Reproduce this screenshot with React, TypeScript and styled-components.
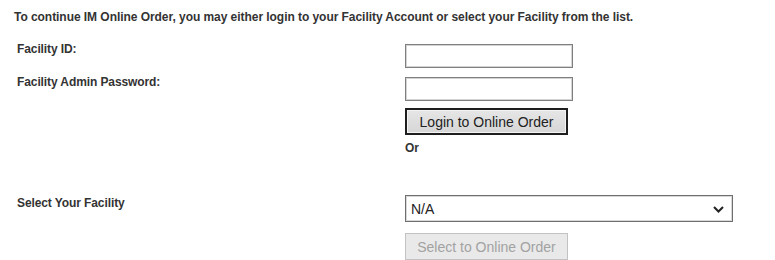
import React from "react";
import styled, { createGlobalStyle } from "styled-components";

const GlobalStyle = createGlobalStyle`
  body {
    margin: 0;
    background: #ffffff;
    font-family: "Liberation Sans", Arial, sans-serif;
    color: #333333;
  }
`;

const Page = styled.div`
  padding: 10px 0 0 14px;
  width: 761px;
  height: 250px;
  overflow: hidden;
`;

const Intro = styled.p`
  margin: 0 0 20px;
  font-size: 12px;
  line-height: 14px;
  font-weight: bold;
  letter-spacing: -0.05px;
  white-space: nowrap;
`;

const FormGrid = styled.div`
  display: grid;
  grid-template-columns: 391px 1fr;
  row-gap: 9px;
  align-items: start;
`;

const Label = styled.label<{ $top?: number }>`
  padding-left: 3px;
  font-size: 12px;
  line-height: 14px;
  font-weight: bold;
  letter-spacing: -0.1px;
  margin-top: ${(props) => props.$top ?? 0}px;
`;

const Cell = styled.div`
  display: flex;
  flex-direction: column;
  align-items: flex-start;
`;

const TextInput = styled.input`
  box-sizing: border-box;
  width: 168px;
  height: 24px;
  margin: 0;
  border: 1px solid #7f7f7f;
  box-shadow: inset 0 0 0 1px #d4d4d4;
  background: #ffffff;
  outline: none;
`;

const LoginButton = styled.button`
  box-sizing: border-box;
  width: 163px;
  height: 27px;
  margin: -2px 0 0;
  border: 2px solid #1e1e1e;
  box-shadow: inset 0 0 0 1px #f4f4f4;
  background: linear-gradient(#e6e6e6, #d6d6d6);
  font-family: "Liberation Sans", Arial, sans-serif;
  font-size: 14px;
  color: #222222;
  padding: 0;
`;

const OrText = styled.span`
  margin-top: 6px;
  font-size: 12px;
  line-height: 14px;
  font-weight: bold;
`;

const SelectWrap = styled.div`
  position: relative;
  display: inline-block;
`;

const FacilitySelect = styled.select`
  box-sizing: border-box;
  display: block;
  width: 328px;
  height: 27px;
  margin: 0;
  padding: 0 0 0 5px;
  border: 1px solid #6f6f6f;
  box-shadow: inset 0 0 0 1px #d8d8d8;
  background: #ffffff;
  appearance: none;
  font-family: "Liberation Sans", Arial, sans-serif;
  font-size: 14px;
  color: #222222;
  outline: none;
`;

const Chevron = styled.svg`
  position: absolute;
  right: 9px;
  top: 11px;
  pointer-events: none;
`;

const SelectButton = styled.button`
  box-sizing: border-box;
  width: 163px;
  height: 27px;
  margin: 11px 0 0;
  border: 1px solid #c2c2c2;
  background: #e9e9e9;
  font-family: "Liberation Sans", Arial, sans-serif;
  font-size: 14px;
  color: #a2a2a2;
  padding: 0;
`;

const Spacer = styled.div`
  grid-column: 1 / 3;
  height: 22px;
`;

export default function App() {
  return (
    <>
      <GlobalStyle />
      <Page>
        <Intro>
          To continue IM Online Order, you may either login to your Facility
          Account or select your Facility from the list.
        </Intro>
        <FormGrid>
          <Label $top={-2}>Facility ID:</Label>
          <Cell>
            <TextInput type="text" />
          </Cell>
          <Label $top={-2}>Facility Admin Password:</Label>
          <Cell>
            <TextInput type="password" />
          </Cell>
          <div />
          <Cell>
            <LoginButton>Login to Online Order</LoginButton>
            <OrText>Or</OrText>
          </Cell>
          <Spacer />
          <Label $top={1}>Select Your Facility</Label>
          <Cell>
            <SelectWrap>
              <FacilitySelect defaultValue="N/A">
                <option>N/A</option>
              </FacilitySelect>
              <Chevron width="11" height="7" viewBox="0 0 11 7">
                <path
                  d="M1 1l4.5 4.5L10 1"
                  fill="none"
                  stroke="#222"
                  strokeWidth="2"
                />
              </Chevron>
            </SelectWrap>
            <SelectButton disabled>Select to Online Order</SelectButton>
          </Cell>
        </FormGrid>
      </Page>
    </>
  );
}
